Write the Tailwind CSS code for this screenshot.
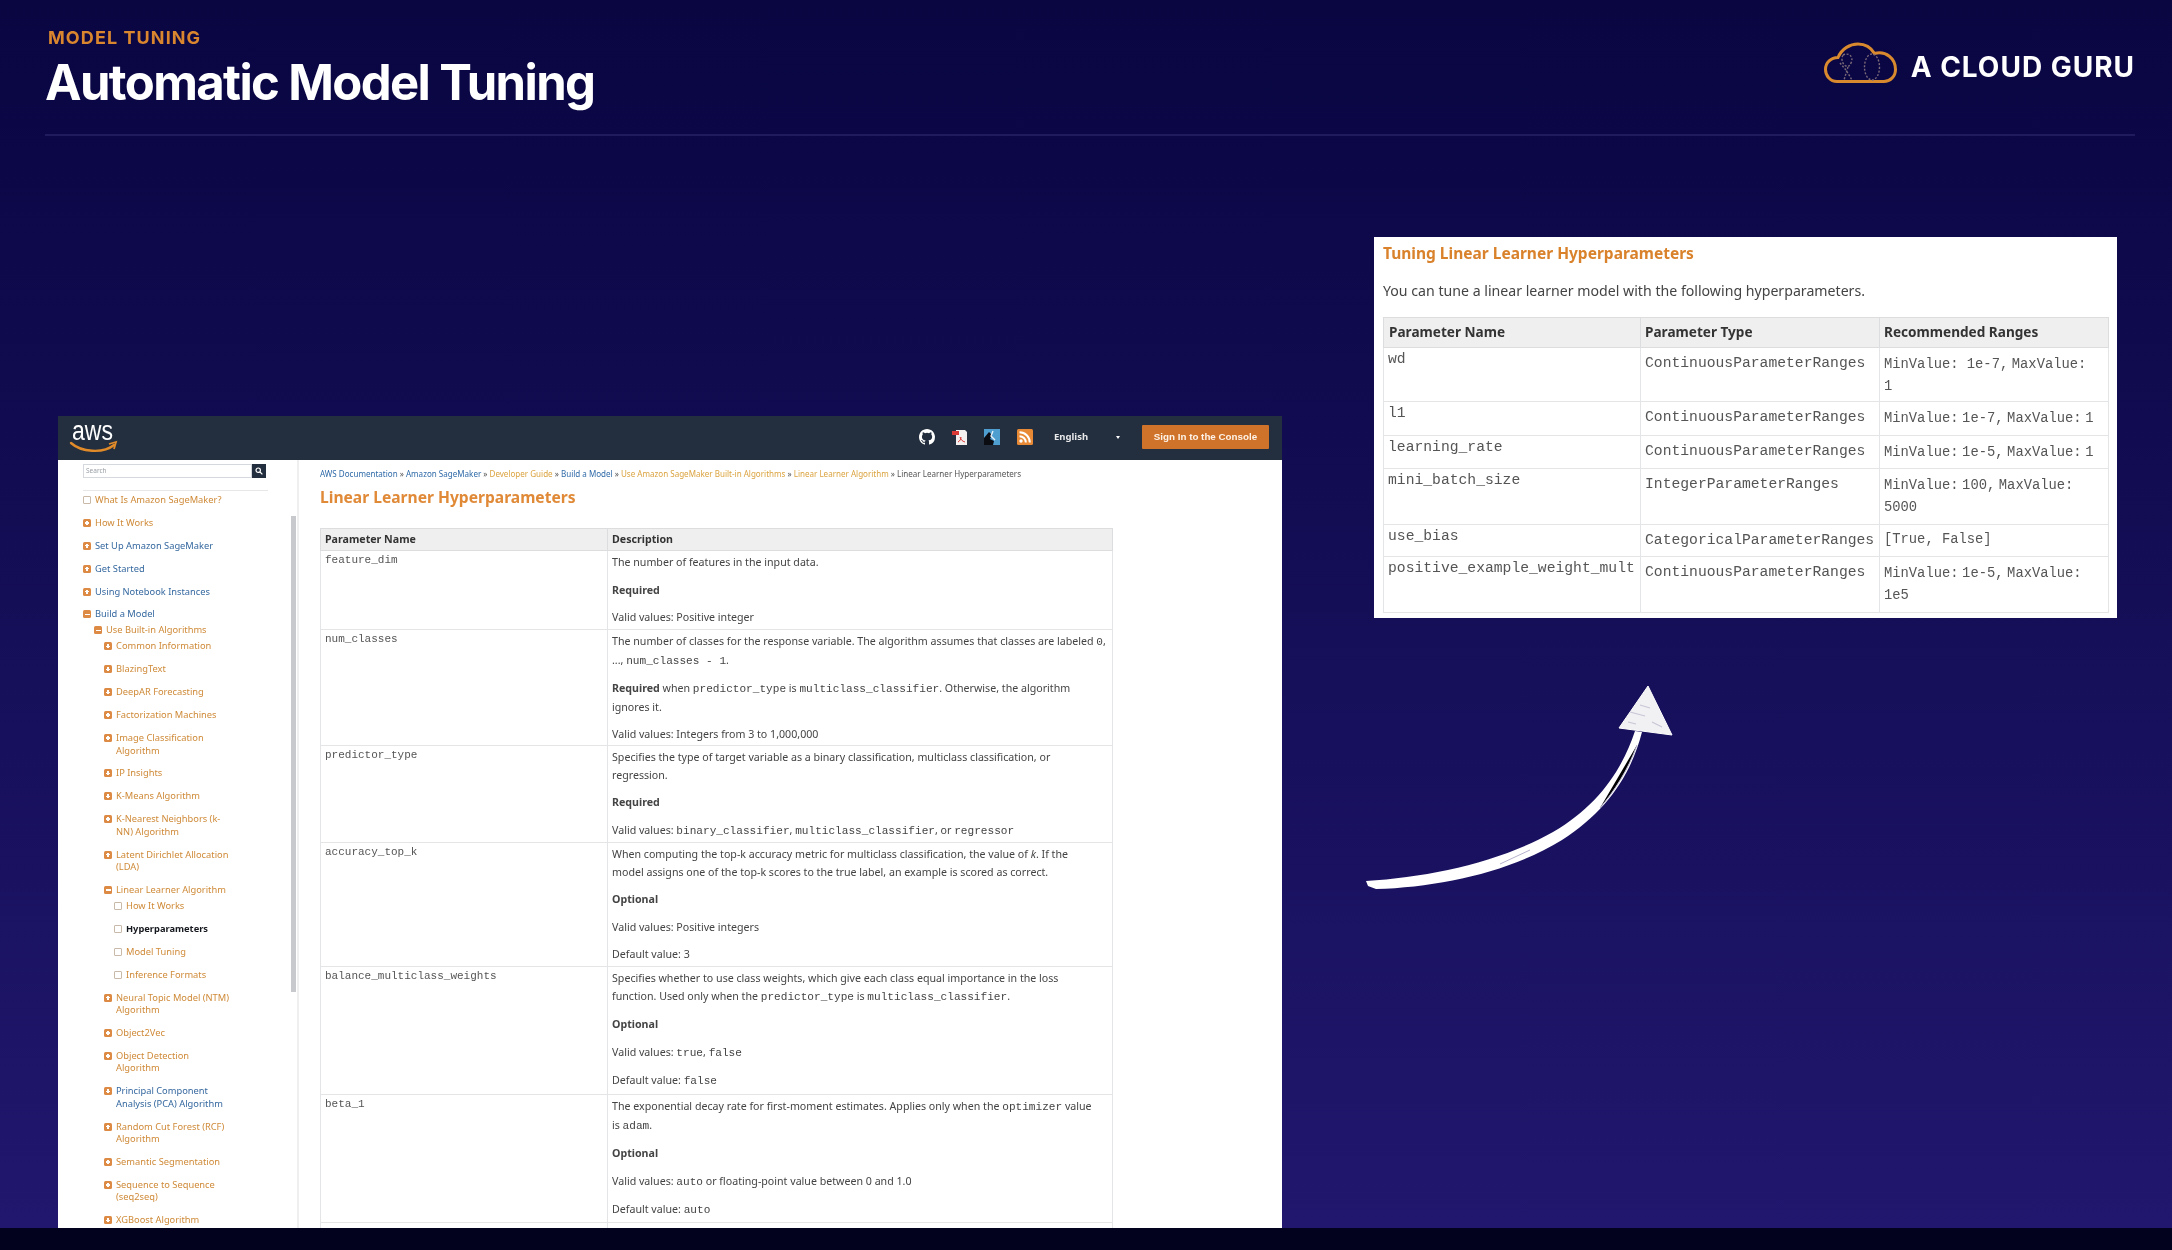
<!DOCTYPE html>
<html lang="en">
<head>
  <meta charset="UTF-8">
  <title>Automatic Model Tuning</title>
  <script src="https://cdn.jsdelivr.net/npm/@tailwindcss/browser@4"></script>
</head>
<body class="bg-[#03021e] overflow-hidden font-['Inter',sans-serif]">
<div class="h-[1250px] w-[2172px] overflow-hidden">
  <div class="h-[1228px] bg-linear-to-b from-[#090642] to-[#21176e] overflow-hidden">

    <!-- slide header -->
    <header class="ml-[45px] mr-[37px] h-[136px] border-b-2 border-[#1f1b5c] flex justify-between">
      <div class="pt-[28px]">
        <p class="text-[18px] leading-[20px] font-bold tracking-[0.06em] text-[#d9862f] pl-[3px] blur-[0.4px]">MODEL TUNING</p>
        <h1 class="mt-[7px] text-[49px] leading-[56px] font-bold tracking-[-0.033em] text-white blur-[0.4px]">Automatic Model Tuning</h1>
      </div>
      <div class="flex items-start pt-[42px] gap-[13px]">
        <svg width="74" height="42" viewBox="0 0 74 42" fill="none">
          <path d="M13 39.5C6 39.5 1.5 33.5 1.5 27.5C1.5 20.5 7 15.5 14 15.5C18 6.5 26 2 34 2C41 2 47 5.5 50.5 11.5C62 8.5 71.5 16.5 71.5 27.5C71.5 34.5 66 39.5 60 39.5Z" stroke="#d98a2e" stroke-width="3"/>
          <ellipse cx="48" cy="25" rx="7.5" ry="13" stroke="#7b6a78" stroke-width="1.4" stroke-dasharray="2 1.6"/>
          <path d="M19 13C25 10 30 15 27 21C26 24 24 25 22 24C18 22 17 17 19 13ZM16 21L22 28L28 38M24 25L20 38" stroke="#7b6a78" stroke-width="1.4" stroke-dasharray="2 1.6"/>
        </svg>
        <span class="text-[28px] leading-[50px] font-bold tracking-[0.035em] text-white blur-[0.4px]">A CLOUD GURU</span>
      </div>
    </header>

    <main class="flex items-start pl-[58px]">
      <!-- docs page screenshot -->
      <section class="mt-[280px] w-[1224px] h-[812px] overflow-hidden bg-white blur-[0.5px] font-['Noto_Sans',sans-serif]">
        <div class="h-[44px] bg-[#232f3e] flex items-center pl-[13px] pr-[13px] pb-[2px]">
          <svg class="overflow-visible" width="46" height="32" viewBox="0 0 46 32" fill="none">
            <text x="1" y="19" font-family="Liberation Sans" font-size="27" fill="#fff" textLength="41" lengthAdjust="spacingAndGlyphs">aws</text>
            <path d="M0 22C10 31 32 33 43 24" stroke="#e08a2a" stroke-width="2.4" stroke-linecap="round"/>
            <path d="M38 23L45 21L43 28" stroke="#e08a2a" stroke-width="1.8" fill="none"/>
          </svg>
          <div class="ml-auto flex items-center">
            <svg width="16" height="16" viewBox="0 0 16 16" fill="#fff"><path d="M8 0C3.58 0 0 3.58 0 8c0 3.54 2.29 6.53 5.47 7.59.4.07.55-.17.55-.38v-1.49c-2.01.37-2.53-.49-2.69-.94-.09-.23-.48-.94-.82-1.13-.28-.15-.68-.52-.01-.53.63-.01 1.08.58 1.23.82.72 1.21 1.87.87 2.33.66.07-.52.28-.87.51-1.07-1.78-.2-3.64-.89-3.64-3.95 0-.87.31-1.59.82-2.15-.08-.2-.36-1.02.08-2.12 0 0 .67-.21 2.2.82a7.4 7.4 0 0 1 4 0c1.53-1.04 2.2-.82 2.2-.82.44 1.1.16 1.92.08 2.12.51.56.82 1.27.82 2.15 0 3.07-1.87 3.75-3.65 3.95.29.25.54.73.54 1.48v2.2c0 .21.15.46.55.38A8 8 0 0 0 16 8c0-4.42-3.58-8-8-8z"/></svg>
            <svg class="ml-[17px]" width="16" height="16" viewBox="0 0 16 16"><path d="M4 1H13L15 3V16H4Z" fill="#f4f0f0"/><path d="M0 2H7V6H0Z" fill="#d93a35"/><path d="M8 8C9 11 10 12 13 13M6 13C8 12 9 10 9 8" stroke="#d93a35" stroke-width="1" fill="none"/></svg>
            <svg class="ml-[16px]" width="16" height="16" viewBox="0 0 16 16"><rect width="16" height="16" fill="#4f9ed0"/><path d="M0 16V9L5 3L8 6L6 10L10 12L9 16Z" fill="#0b0b12"/><path d="M9 2L7 7L11 11" stroke="#e6f0f8" stroke-width="1.4" fill="none"/></svg>
            <svg class="ml-[17px]" width="16" height="16" viewBox="0 0 16 16"><rect width="16" height="16" rx="1.5" fill="#e88a35"/><circle cx="4" cy="12" r="1.7" fill="#fff"/><path d="M2.5 7.2a6.3 6.3 0 0 1 6.3 6.3M2.5 3.2a10.3 10.3 0 0 1 10.3 10.3" stroke="#fff" stroke-width="2" fill="none"/></svg>
            <span class="ml-[21px] w-[36px] text-[9.5px] font-bold text-[#e8e8ea]">English</span>
            <span class="ml-[26px] w-0 h-0 border-x-[2.5px] border-x-transparent border-t-[3px] border-t-white"></span>
            <button class="ml-[22px] w-[127px] h-[24px] rounded-[1px] bg-[#d0732a] text-[9.8px] font-bold text-[#fdf3e8] font-['Liberation_Sans',sans-serif]">Sign In to the Console</button>
          </div>
        </div>

        <div class="flex">
          <aside class="relative w-[241px] h-[768px] border-r-2 border-[#efeff0] pl-[25px] pt-[4px] overflow-hidden shrink-0">
            <div class="flex w-[184px] h-[14px]">
              <div class="w-[169px] border border-[#d5d8dc] text-[6.5px] leading-[12px] pl-[2px] text-[#9aa0a6]">Search</div>
              <div class="w-[14px] bg-[#232f3e] flex items-center justify-center">
                <svg width="8" height="8" viewBox="0 0 8 8" fill="none" stroke="#fff" stroke-width="1.2"><circle cx="3.2" cy="3.2" r="2.2"/><path d="M5 5L7.4 7.4"/></svg>
              </div>
            </div>
            <div class="w-[185px] mt-[12px] border-t border-[#e6e7e8]"></div>
            <ul id="nav" class="mt-[3px] text-[9.3px] leading-[12.5px]"></ul>
            <div class="absolute left-[233px] top-[56px] w-[5px] h-[476px] bg-[#c8c9cd]"></div>
          </aside>

          <div class="pl-[21px] pt-[7px] text-[#444]">
            <p class="text-[8.05px] leading-[13px] whitespace-nowrap text-[#555]"><span class="text-[#2f6aa8]">AWS Documentation</span> » <span class="text-[#2f6aa8]">Amazon SageMaker</span> » <span class="text-[#dba33f]">Developer Guide</span> » <span class="text-[#2f6aa8]">Build a Model</span> » <span class="text-[#dba33f]">Use Amazon SageMaker Built-in Algorithms</span> » <span class="text-[#dba33f]">Linear Learner Algorithm</span> » Linear Learner Hyperparameters</p>
            <h2 class="mt-[5px] text-[15.6px] leading-[24px] font-bold text-[#e08a38]">Linear Learner Hyperparameters</h2>
            <table class="mt-[19px] w-[792px] table-fixed border-collapse text-[10.65px] leading-[17.5px] [&_td]:align-top [&_td]:border [&_td]:border-[#e4e5e6] [&_th]:border [&_th]:border-[#dcdddf]">
              <colgroup><col class="w-[287px]"><col class="w-[505px]"></colgroup>
              <thead>
                <tr class="h-[22px] bg-[#efeff0] text-[#333] text-left">
                  <th class="pl-[4px] font-bold">Parameter Name</th>
                  <th class="pl-[4px] font-bold">Description</th>
                </tr>
              </thead>
              <tbody class="[&_td:first-child]:pl-[4px] [&_td:first-child]:pt-[2px] [&_td:first-child]:font-['Liberation_Mono',monospace] [&_td:first-child]:text-[11px] [&_td:first-child]:leading-[14px] [&_td:first-child]:text-[#555] [&_td:last-child]:pl-[4px] [&_td:last-child]:pt-[3px] [&_p]:mb-[10px] [&_p:last-child]:mb-0 [&_code]:font-['Liberation_Mono',monospace] [&_code]:text-[11.1px]">
                <tr class="h-[79px]"><td>feature_dim</td><td><p>The number of features in the input data.</p><p><b>Required</b></p><p>Valid values: Positive integer</p></td></tr>
                <tr class="h-[116px]"><td>num_classes</td><td><p>The number of classes for the response variable. The algorithm assumes that classes are labeled <code>0</code>,<br>..., <code>num_classes - 1</code>.</p><p><b>Required</b> when <code>predictor_type</code> is <code>multiclass_classifier</code>. Otherwise, the algorithm<br>ignores it.</p><p>Valid values: Integers from 3 to 1,000,000</p></td></tr>
                <tr class="h-[97px]"><td>predictor_type</td><td><p>Specifies the type of target variable as a binary classification, multiclass classification, or<br>regression.</p><p><b>Required</b></p><p>Valid values: <code>binary_classifier</code>, <code>multiclass_classifier</code>, or <code>regressor</code></p></td></tr>
                <tr class="h-[124px]"><td>accuracy_top_k</td><td><p>When computing the top-k accuracy metric for multiclass classification, the value of <i>k</i>. If the<br>model assigns one of the top-k scores to the true label, an example is scored as correct.</p><p><b>Optional</b></p><p>Valid values: Positive integers</p><p>Default value: 3</p></td></tr>
                <tr class="h-[128px]"><td>balance_multiclass_weights</td><td><p>Specifies whether to use class weights, which give each class equal importance in the loss<br>function. Used only when the <code>predictor_type</code> is <code>multiclass_classifier</code>.</p><p><b>Optional</b></p><p>Valid values: <code>true</code>, <code>false</code></p><p>Default value: <code>false</code></p></td></tr>
                <tr class="h-[128px]"><td>beta_1</td><td><p>The exponential decay rate for first-moment estimates. Applies only when the <code>optimizer</code> value<br>is <code>adam</code>.</p><p><b>Optional</b></p><p>Valid values: <code>auto</code> or floating-point value between 0 and 1.0</p><p>Default value: <code>auto</code></p></td></tr>
                <tr class="h-[40px]"><td></td><td></td></tr>
              </tbody>
            </table>
          </div>
        </div>
      </section>

      <!-- right column -->
      <div class="ml-[92px] mt-[101px] w-[743px]">
        <section class="h-[381px] bg-white px-[9px] pt-[6px] blur-[0.5px] font-['Noto_Sans',sans-serif] text-[#444]">
          <h3 class="text-[15.5px] leading-[20px] font-bold text-[#d9822b]">Tuning Linear Learner Hyperparameters</h3>
          <p class="mt-[18px] text-[14.15px] leading-[20px]">You can tune a linear learner model with the following hyperparameters.</p>
          <table class="mt-[16px] w-[725px] table-fixed border-collapse text-[14.7px] font-['Liberation_Mono',monospace] text-[#555] [&_td]:align-top [&_td]:border [&_td]:border-[#e4e5e6] [&_th]:border [&_th]:border-[#dcdddf]">
            <colgroup><col class="w-[257px]"><col class="w-[239px]"><col class="w-[229px]"></colgroup>
            <thead>
              <tr class="h-[30px] bg-[#efeff0] text-left font-['Noto_Sans',sans-serif] text-[13.6px] text-[#333]">
                <th class="pl-[5px] font-bold">Parameter Name</th><th class="pl-[4px] font-bold">Parameter Type</th><th class="pl-[4px] font-bold">Recommended Ranges</th>
              </tr>
            </thead>
            <tbody class="leading-[22px] [&_td]:pl-[4px] [&_td]:pt-[4px] [&_td:first-child]:pt-0 [&_td:last-child]:text-[13.8px]">
              <tr class="h-[54px] [&_td]:pt-[3px]"><td>wd</td><td>ContinuousParameterRanges</td><td>MinValue: 1e-7,<span class="font-['Noto_Sans']"> </span>MaxValue:<br>1</td></tr>
              <tr class="h-[34px]"><td>l1</td><td>ContinuousParameterRanges</td><td>MinValue:<span class="font-['Noto_Sans']"> </span>1e-7,<span class="font-['Noto_Sans']"> </span>MaxValue:<span class="font-['Noto_Sans']"> </span>1</td></tr>
              <tr class="h-[33px]"><td>learning_rate</td><td>ContinuousParameterRanges</td><td>MinValue:<span class="font-['Noto_Sans']"> </span>1e-5,<span class="font-['Noto_Sans']"> </span>MaxValue:<span class="font-['Noto_Sans']"> </span>1</td></tr>
              <tr class="h-[56px]"><td>mini_batch_size</td><td>IntegerParameterRanges</td><td>MinValue:<span class="font-['Noto_Sans']"> </span>100,<span class="font-['Noto_Sans']"> </span>MaxValue:<br>5000</td></tr>
              <tr class="h-[32px] [&_td]:pt-[3px]"><td>use_bias</td><td>CategoricalParameterRanges</td><td class="text-[14.5px]">[True, False]</td></tr>
              <tr class="h-[56px]"><td class="whitespace-nowrap">positive_example_weight_mult</td><td>ContinuousParameterRanges</td><td>MinValue:<span class="font-['Noto_Sans']"> </span>1e-5,<span class="font-['Noto_Sans']"> </span>MaxValue:<br>1e5</td></tr>
            </tbody>
          </table>
        </section>

        <!-- hand drawn arrow -->
        <svg class="ml-[-14px] mt-[62px] overflow-visible" width="320" height="210" viewBox="1360 680 320 210">
          <path d="M1366 881C1430 877 1500 862 1553 832C1598 806 1622 770 1635 731L1642 732C1631 775 1606 812 1562 840C1510 872 1440 887 1376 889L1368 886Z" fill="#fff"/>
          <path d="M1648 686L1619 728L1672 735Z" fill="#f1f0f2" stroke="#fff" stroke-width="1" stroke-linejoin="round"/>
          <path d="M1630 712L1645 716M1640 705L1650 708M1652 722L1662 727M1628 722L1636 724" stroke="#c9c6d6" stroke-width="1.2"/>
          <path d="M1637 745C1628 770 1615 790 1600 808M1530 850L1500 864" stroke="#b4b1cc" stroke-width="1"/>
        </svg>
      </div>
    </main>
  </div>
</div>

<script>
  // [label, level, icon, colour, extra]
  const orange = "text-[#cf8a38]", blue = "text-[#35689f]";
  const items = [
    ["What Is Amazon SageMaker?", 0, "leaf", orange],
    ["How It Works", 0, "plus", orange],
    ["Set Up Amazon SageMaker", 0, "plus", blue],
    ["Get Started", 0, "plus", blue],
    ["Using Notebook Instances", 0, "plus", blue],
    ["Build a Model", 0, "minus", blue, "open"],
    ["Use Built-in Algorithms", 1, "minus", orange, "open"],
    ["Common Information", 2, "plus", orange],
    ["BlazingText", 2, "plus", orange],
    ["DeepAR Forecasting", 2, "plus", orange],
    ["Factorization Machines", 2, "plus", orange],
    ["Image Classification<br>Algorithm", 2, "plus", orange],
    ["IP Insights", 2, "plus", orange],
    ["K-Means Algorithm", 2, "plus", orange],
    ["K-Nearest Neighbors (k-<br>NN) Algorithm", 2, "plus", orange],
    ["Latent Dirichlet Allocation<br>(LDA)", 2, "plus", orange],
    ["Linear Learner Algorithm", 2, "minus", orange, "open"],
    ["How It Works", 3, "leaf", orange],
    ["Hyperparameters", 3, "leaf", "text-[#16191f] font-bold"],
    ["Model Tuning", 3, "leaf", orange],
    ["Inference Formats", 3, "leaf", orange],
    ["Neural Topic Model (NTM)<br>Algorithm", 2, "plus", orange],
    ["Object2Vec", 2, "plus", orange],
    ["Object Detection<br>Algorithm", 2, "plus", orange],
    ["Principal Component<br>Analysis (PCA) Algorithm", 2, "plus", blue],
    ["Random Cut Forest (RCF)<br>Algorithm", 2, "plus", orange],
    ["Semantic Segmentation", 2, "plus", orange],
    ["Sequence to Sequence<br>(seq2seq)", 2, "plus", orange],
    ["XGBoost Algorithm", 2, "plus", orange]
  ];
  const indents = ["pl-0", "pl-[11px]", "pl-[21px]", "pl-[31px]"];
  const icons = {
    leaf: '<span class="shrink-0 w-[8px] h-[8px] mt-[2px] mr-[4px] rounded-[1px] border border-[#c9b9a8] bg-white"></span>',
    plus: '<span class="relative shrink-0 w-[8px] h-[8px] mt-[2px] mr-[4px] rounded-[1.5px] bg-[#dd8a45] flex items-center justify-center"><span class="absolute w-[4px] h-[1.4px] bg-white"></span><span class="absolute w-[1.4px] h-[4px] bg-white"></span></span>',
    minus: '<span class="relative shrink-0 w-[8px] h-[8px] mt-[2px] mr-[4px] rounded-[1.5px] bg-[#dd8a45] flex items-center justify-center"><span class="absolute w-[5px] h-[1.4px] bg-white"></span></span>'
  };
  document.getElementById("nav").innerHTML = items.map(([label, level, icon, colour, open]) =>
    `<li class="flex ${indents[level]} ${open ? "mb-[3.5px]" : "mb-[10.4px]"} ${colour}">${icons[icon]}<span>${label}</span></li>`
  ).join("");
</script>
</body>
</html>
